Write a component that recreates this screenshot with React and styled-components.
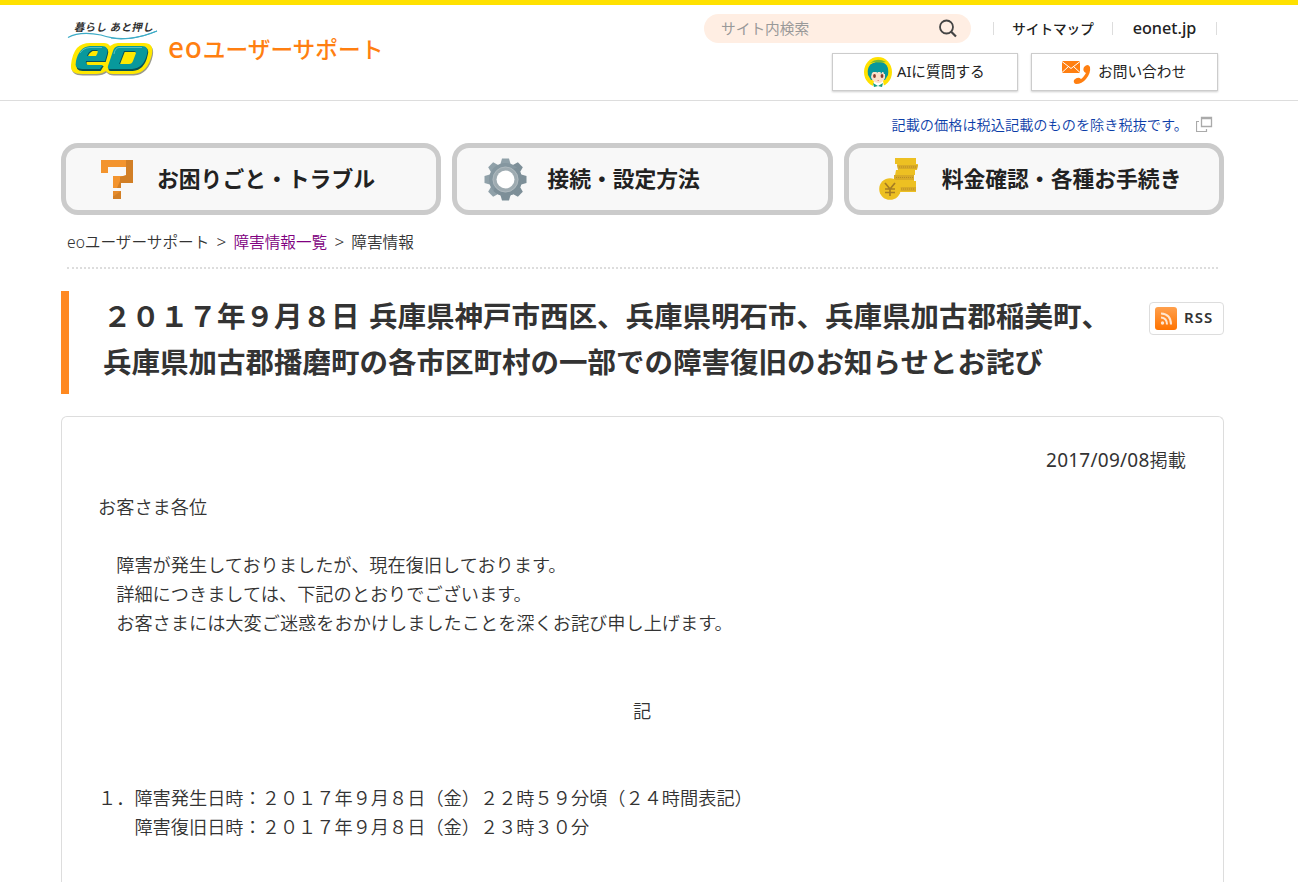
import styled, { createGlobalStyle, css } from 'styled-components';

const GlobalStyle = createGlobalStyle`
    * {
        box-sizing: border-box;
    }

    body {
        margin: 0;
        background: #fff;
        color: #333;
        font-family: "Noto Sans", "Noto Sans CJK JP", sans-serif;
    }

    a {
        color: inherit;
        text-decoration: none;
    }

    svg {
        display: block;
        flex: none;
    }
`

const Header = styled.header`
    height: 101px;
    padding: 0 81px 0 67px;
    display: flex;
    justify-content: space-between;
    border-top: 5px solid #ffe100;
    border-bottom: 1px solid #ddd;
`

const Brand = styled.a`
    display: flex;
    padding-top: 14px;
`

const BrandName = styled.span`
    margin: 10px 0 0 9px;
    color: #ff7f11;
    font-size: 22.7px;
    font-weight: 500;
    line-height: 36px;
    white-space: nowrap;

    b {
        font-size: 28px;
        font-weight: 500;
        letter-spacing: .8px;
    }
`

const HeaderTools = styled.div`
    display: flex;
    flex-direction: column;
    align-items: flex-end;
    padding-top: 9px;
`

const UtilityRow = styled.div`
    display: flex;
    align-items: center;
`

const SearchBox = styled.div`
    width: 267px;
    height: 29px;
    margin-right: 22px;
    padding: 0 13px 0 17px;
    display: flex;
    align-items: center;
    justify-content: space-between;
    border-radius: 15px;
    background: #ffeee3;
    color: #999;
    font-size: 14.7px;
    line-height: 20px;

    span {
        margin-top: -2px;
    }
`

const UtilityLink = styled.a`
    width: ${props => props.$width}px;
    border-left: 1px solid #ddd;
    color: #222;
    font-size: ${props => props.$size}px;
    font-weight: 500;
    line-height: 13px;
    text-align: center;
    white-space: nowrap;

    &:last-child {
        border-right: 1px solid #ddd;
    }
`

const ContactRow = styled.div`
    display: flex;
    gap: 13px;
    margin: 10px -1px 0 0;
`

const ContactButton = styled.a`
    width: ${props => props.$width}px;
    height: 38px;
    padding-left: ${props => props.$indent}px;
    display: flex;
    align-items: center;
    gap: ${props => props.$gap}px;
    border: 1px solid #ccc;
    box-shadow: 0 1px 2px rgba(0,0,0,0.2);
    color: #222;
    font-size: 14.7px;
    white-space: nowrap;

    span {
        margin-top: -4px;
    }
`

const Main = styled.main`
    width: 1163px;
    margin-left: 61px;
`

const PriceNote = styled.a`
    height: 42px;
    padding: 4px 11px 0 0;
    display: flex;
    align-items: center;
    justify-content: flex-end;
    gap: 8px;
    color: #0b3da8;
    font-size: 14.2px;
    font-weight: 350;
`

const NavList = styled.nav`
    display: grid;
    grid-template-columns: repeat(3, 1fr);
    gap: 11px;
`

const NavButton = styled.a`
    height: 72px;
    padding-left: ${props => props.$indent}px;
    display: flex;
    align-items: center;
    gap: ${props => props.$gap}px;
    border: 5px solid #cbcbcb;
    border-radius: 17px;
    background: #f8f8f8;
    color: #222;
    font-size: 21.8px;
    font-weight: 700;
    white-space: nowrap;

    span {
        margin-top: -3px;
    }
`

const Breadcrumb = styled.div`
    height: 54px;
    margin: 0 6px;
    display: flex;
    align-items: center;
    gap: 6px;
    border-bottom: 2px dotted #ddd;
    font-size: 15.65px;
    font-weight: 350;
`

const Separator = styled.span`
    width: 12px;
    text-align: center;
    font-size: 17px;
`

const VisitedLink = styled.a`
    color: #800080;
`

const TitleRow = styled.div`
    height: 103px;
    margin-top: 22px;
    display: flex;
    justify-content: space-between;
    border-left: 8px solid #ff8921;
`

const Title = styled.h1`
    margin: 2px 0 0 34px;
    font-size: 28.5px;
    font-weight: 700;
    line-height: 46px;
    white-space: nowrap;
    word-spacing: 2px;
`

const RssButton = styled.a`
    width: 75px;
    height: 33px;
    margin-top: 11px;
    padding-left: 5px;
    display: flex;
    align-items: center;
    gap: 7px;
    border: 1px solid #ddd;
    border-radius: 4px;
    font-size: 15px;
    font-weight: 600;
    letter-spacing: 1px;

    span {
        margin-top: -3px;
    }
`

const Article = styled.article`
    height: 466px;
    margin-top: 22px;
    padding: 29px 37px 0 36px;
    border: 1px solid #ddd;
    border-bottom: 0;
    border-radius: 6px 6px 0 0;
    font-size: 18.2px;
    font-weight: 350;
    line-height: 29px;
`

const PostedDate = styled.span`
    font-size: 19px;
    font-weight: 400;
    letter-spacing: .25px;
    line-height: 1;
`

const Line = styled.p`
    margin: 0;
    min-height: 29px;
    white-space: pre;
    ${props => props.$align && css`text-align: ${props.$align};`}
    ${props => props.$top && css`margin-top: ${props.$top}px;`}
`

function EoLogo() {
    return (
        <svg width="92" height="60" viewBox="0 0 92 60">
            <text x="7" y="12" fontSize="10.5" fontWeight="700" fill="#333" transform="skewX(-12) translate(2.5 0)" textLength="79">暮らし あと押し</text>
            <path d="M1 18.500C11 13 24 14 34 16C51 22 72 20 90 12" fill="none" stroke="#3cabc6" strokeWidth="1.2" />
            <path d="M44 19Q63 23 90 12" fill="none" stroke="#3cabc6" />
            <path d="M10 29Q15 24 23 24H37Q41 24 43 27Q47 24 51 24H77Q87 24 85 35Q81 54 66 55H46Q41 55 39 52Q35 55 29 55H15Q3 55 4 46Q5 35 10 29Z" fill="#9a9a8a" transform="translate(.8 1.500)" />
            <path d="M10 29Q15 24 23 24H37Q41 24 43 27Q47 24 51 24H77Q87 24 85 35Q81 54 66 55H46Q41 55 39 52Q35 55 29 55H15Q3 55 4 46Q5 35 10 29Z" fill="#ffe800" />
            <g fill="#075258" transform="translate(.7 1)">
                <path fillRule="evenodd" d="M23 27H35Q42 27 40 35L38 42H19Q18 46 22 46H36L33 51H15Q7 51 9 42Q12 28 23 27ZM25 31Q21 33 20 37H29Q32 32 30 31Z" />
                <path fillRule="evenodd" d="M51 27H75Q82 27 80 35Q77 50 65 51H43Q40 51 41 47L46 32Q47 28 51 27ZM57 32 52 45H62Q65 45 66 42L69 34Q69 32 67 32Z" />
            </g>
            <g fill="#08999c">
                <path fillRule="evenodd" d="M23 27H35Q42 27 40 35L38 42H19Q18 46 22 46H36L33 50H15Q7 50 9 42Q12 28 23 27ZM25 31Q21 33 20 37H29Q32 32 30 31Z" />
                <path fillRule="evenodd" d="M51 27H75Q82 27 80 35Q77 49 65 50H43Q40 50 41 47L46 32Q47 28 51 27ZM57 32 52 45H62Q65 45 66 42L69 34Q69 32 67 32Z" />
            </g>
            <path d="M13 34Q16 29 23 28.500H35M47 35Q48 29 52 28.500H75" fill="none" stroke="#6cc9c8" strokeWidth=".8" />
        </svg>
    )
}

function SearchIcon() {
    return (
        <svg width="20" height="20" viewBox="0 0 20 20" fill="none" stroke="#444">
            <circle cx="8.500" cy="8" r="6.500" strokeWidth="1.800" />
            <path d="M13 12.500 18 17.500" strokeWidth="2.200" />
        </svg>
    )
}

function AiFace() {
    return (
        <svg width="28" height="30" viewBox="0 0 28 30">
            <ellipse cx="14" cy="15" rx="14" ry="15" fill="#ffe100" />
            <path d="M10 24H19L20 29Q14 31 9 29Z" fill="#fff" />
            <path d="M9 26 14 29 10 30ZM19 26 14 29 18 30Z" fill="#159b83" />
            <path d="M4 18Q2 6 14 5Q26 5 24 18L21 23H7Z" fill="#08979c" />
            <path d="M7 15H21V21Q19 26 14 26Q8 25 7 20Z" fill="#fbe0cb" />
            <path d="M5 18Q3 6 14 5Q25 5 23 17L20 17 19 14 17 17 16 13 13 16 12 13 8 16 7 20Z" fill="#08979c" />
            <path d="M6 6Q13 0 22 5Q16 6 11 5Z" fill="#79b934" />
            <ellipse cx="10.500" cy="19" rx="1.400" ry="1.900" fill="#8b3a2c" />
            <ellipse cx="18" cy="19" rx="1.400" ry="1.900" fill="#8b3a2c" />
            <path d="M13.500 23.500H15" stroke="#d66" strokeWidth=".7" />
        </svg>
    )
}

function ContactIcon() {
    return (
        <svg width="29" height="26" viewBox="0 0 29 26">
            <path d="M0 2H18V14H0Z" fill="#ff7f11" />
            <path d="M0 2.500 9 9.500 18 2.500M0 13.500 6.500 7.500M18 13.500 11.500 7.500" fill="none" stroke="#fff" strokeWidth="1" />
            <path d="M22 8Q26 4 28 8Q29 14 24 20Q20 25 14 25Q11 24 12 21Q16 17 19 20Q21 19 24 14Q20 12 22 8Z" fill="#ff7f11" />
        </svg>
    )
}

function WindowIcon() {
    return (
        <svg width="17" height="16" viewBox="0 0 17 16" fill="none" stroke="#aaa">
            <path d="M5.500 1.500H15.500V10.500H5.500Z M5 2.500H16" strokeWidth="1.300" />
            <path d="M3 5.500H.500V15.500H10.500V13" strokeWidth="1.200" />
        </svg>
    )
}

function QuestionIcon() {
    return (
        <svg width="33" height="39" viewBox="0 0 33 39">
            <path d="M0 0H32V23H20V28H12V16H25V7H7V13H0Z" fill="#f3942e" />
            <path d="M25 0H32V23H20V28H16L19 21V17L25 15Z M12 31H20V39H12Z" fill="#d27f26" />
            <path d="M12 31H20L13 36H12Z" fill="#e68b2b" />
        </svg>
    )
}

function GearIcon() {
    return (
        <svg width="43" height="43" viewBox="-21.5 -21.5 43 43">
            {[0, 45, 90, 135, 180, 225, 270, 315].map(angle => (
                <path key={angle} d="M-5.500-14-3.500-21H3.500L5.500-14Z" fill={angle > 0 && angle < 225 ? '#7d8f98' : '#90a1a9'} transform={`rotate(${angle})`} />
            ))}
            <circle r="12.500" fill="none" stroke="#8597a0" strokeWidth="8" />
            <path d="M11.700-11.700A16.500 16.500 0 0 1-11.700 11.700L-7-7Z" fill="#7d8f98" />
            <circle r="10.800" fill="none" stroke="#9eabb1" strokeWidth="4" />
            <circle r="12.500" fill="none" stroke="#b2bcc1" strokeWidth=".8" />
            <circle r="9" fill="#fff" />
        </svg>
    )
}

function CoinIcon() {
    return (
        <svg width="40" height="42" viewBox="0 0 40 42">
            <path d="M16 0H37V6H39L38 12H36V17H35V23H37V34H17V23H15L17 12H19L18 6H16Z" fill="#edc022" />
            <path d="M18 7H39L38 11H19ZM15 17H35V22H15ZM20 29H37V33H20Z" fill="#d8aa26" />
            <path d="M20 9H38M17 19.500H34M22 31H36" stroke="#b98c25" strokeDasharray="1 1" />
            <circle cx="11" cy="31" r="10.800" fill="#edc022" />
            <path d="M6 25 11 31 16 25M11 31V38M6 31H16M6 34.500H16" fill="none" stroke="#a67d23" strokeWidth="1.700" />
        </svg>
    )
}

function RssIcon() {
    return (
        <svg width="22" height="23" viewBox="0 0 22 23">
            <defs>
                <linearGradient id="rss" x1="0" y1="0" x2="0" y2="1">
                    <stop offset="0" stopColor="#ffa04d" />
                    <stop offset="1" stopColor="#ff7300" />
                </linearGradient>
            </defs>
            <rect width="22" height="23" rx="3" fill="url(#rss)" />
            <circle cx="7.500" cy="16" r="1.700" fill="#ffe6d0" />
            <path d="M6 10.500Q12 11 12 17.500M6 6.500Q16 7 16 17.500" fill="none" stroke="#ffe6d0" strokeWidth="2" />
        </svg>
    )
}

export default function App() {
    return (
        <>
            <GlobalStyle />
            <Header>
                <Brand href="#">
                    <EoLogo />
                    <BrandName><b>eo</b>ユーザーサポート</BrandName>
                </Brand>
                <HeaderTools>
                    <UtilityRow>
                        <SearchBox>
                            <span>サイト内検索</span>
                            <SearchIcon />
                        </SearchBox>
                        <UtilityLink href="#" $width={119} $size={13.6}>サイトマップ</UtilityLink>
                        <UtilityLink href="#" $width={105} $size={16.2}>eonet.jp</UtilityLink>
                    </UtilityRow>
                    <ContactRow>
                        <ContactButton href="#" $width={186} $indent={31} $gap={5}>
                            <AiFace />
                            <span>AIに質問する</span>
                        </ContactButton>
                        <ContactButton href="#" $width={187} $indent={30} $gap={7}>
                            <ContactIcon />
                            <span>お問い合わせ</span>
                        </ContactButton>
                    </ContactRow>
                </HeaderTools>
            </Header>
            <Main>
                <PriceNote href="#">
                    記載の価格は税込記載のものを除き税抜です。
                    <WindowIcon />
                </PriceNote>
                <NavList>
                    <NavButton href="#" $indent={35} $gap={23}>
                        <QuestionIcon />
                        <span>お困りごと・トラブル</span>
                    </NavButton>
                    <NavButton href="#" $indent={27} $gap={20}>
                        <GearIcon />
                        <span>接続・設定方法</span>
                    </NavButton>
                    <NavButton href="#" $indent={30} $gap={23}>
                        <CoinIcon />
                        <span>料金確認・各種お手続き</span>
                    </NavButton>
                </NavList>
                <Breadcrumb>
                    <a href="#">eoユーザーサポート</a>
                    <Separator>&gt;</Separator>
                    <VisitedLink href="#">障害情報一覧</VisitedLink>
                    <Separator>&gt;</Separator>
                    <span>障害情報</span>
                </Breadcrumb>
                <TitleRow>
                    <Title>
                        ２０１７年９月８日 兵庫県神戸市西区、兵庫県明石市、兵庫県加古郡稲美町、<br />
                        兵庫県加古郡播磨町の各市区町村の一部での障害復旧のお知らせとお詫び
                    </Title>
                    <RssButton href="#">
                        <RssIcon />
                        <span>RSS</span>
                    </RssButton>
                </TitleRow>
                <Article>
                    <Line $align="right"><PostedDate>2017/09/08</PostedDate>掲載</Line>
                    <Line $top={18}>お客さま各位</Line>
                    <Line $top={29}>　障害が発生しておりましたが、現在復旧しております。</Line>
                    <Line>　詳細につきましては、下記のとおりでございます。</Line>
                    <Line>　お客さまには大変ご迷惑をおかけしましたことを深くお詫び申し上げます。</Line>
                    <Line $top={59} $align="center">記</Line>
                    <Line $top={58}>１．障害発生日時：２０１７年９月８日（金）２２時５９分頃（２４時間表記）</Line>
                    <Line>　　障害復旧日時：２０１７年９月８日（金）２３時３０分</Line>
                </Article>
            </Main>
        </>
    )
}
